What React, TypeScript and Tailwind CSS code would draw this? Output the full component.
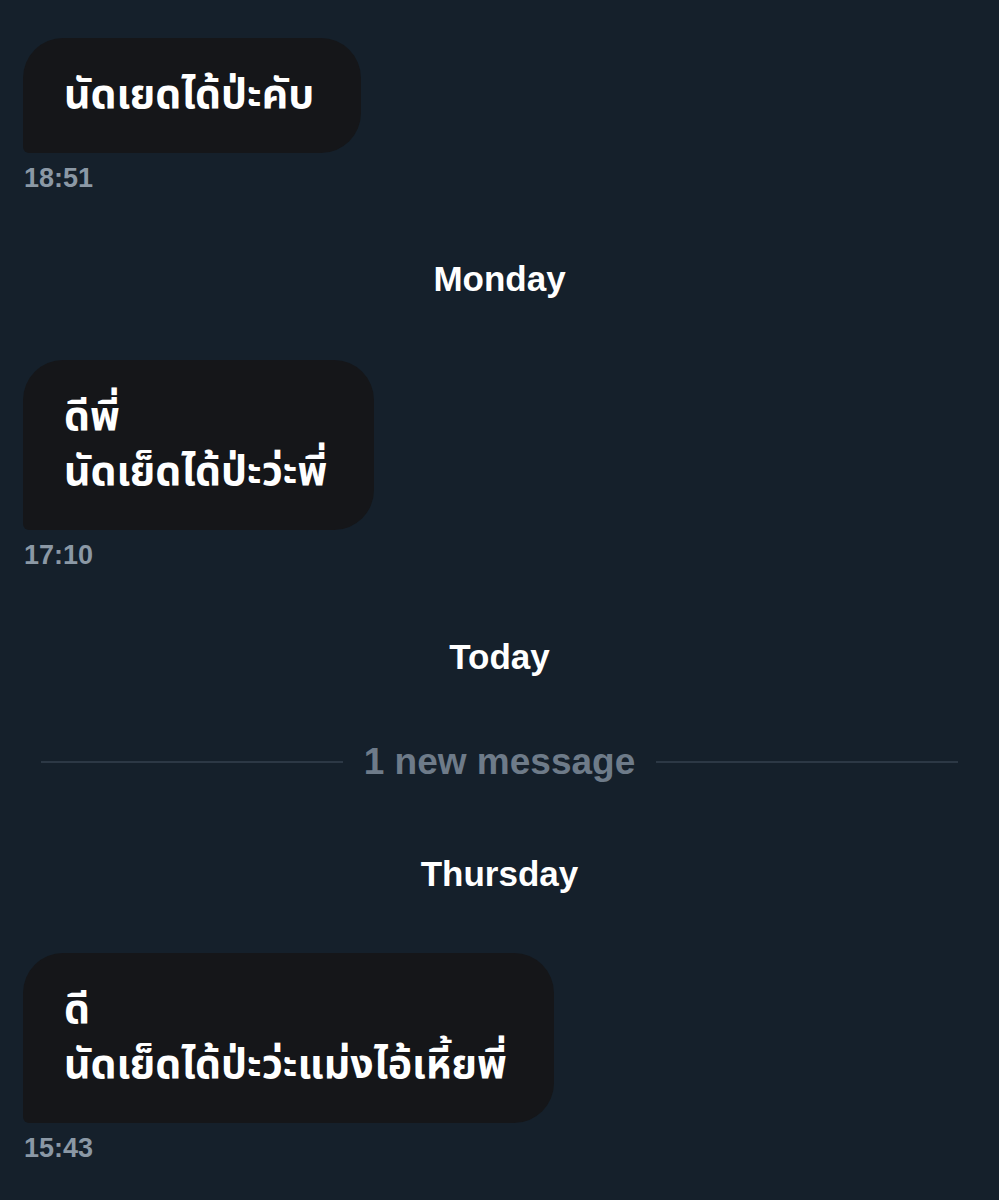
const thai = { fontFamily: '"Noto Sans Thai", "Noto Sans", "Liberation Sans", sans-serif' };

const Bubble = ({ lines, time }: { lines: string[]; time: string }) => (
  <div className="flex flex-col items-start">
    <div
      className="bg-[#151619] text-white rounded-[40px] rounded-bl-[6px] pl-[41px] pr-[47px] pt-[30px] pb-[30px] text-[41px] leading-[55px] font-bold"
      style={thai}
    >
      {lines.map((l) => (
        <div key={l}>{l}</div>
      ))}
    </div>
    <div className="mt-[7px] pl-px text-[27px] leading-[36px] font-bold text-[#8b98a5] font-['Liberation_Sans',sans-serif]">
      {time}
    </div>
  </div>
);

const DayLabel = ({ label }: { label: string }) => (
  <div className="text-center text-white font-bold text-[35px] leading-[40px] font-['Liberation_Sans',sans-serif]">
    {label}
  </div>
);

export default function App() {
  return (
    <div className="min-h-[1200px] w-[999px] bg-[#15202b] px-[23px] pt-[38px] flex flex-col">
      <Bubble lines={["นัดเยดได้ป่ะคับ"]} time="18:51" />
      <div className="mt-[63px]">
        <DayLabel label="Monday" />
      </div>
      <div className="mt-[61px]">
        <Bubble lines={["ดีพี่", "นัดเย็ดได้ป่ะว่ะพี่"]} time="17:10" />
      </div>
      <div className="mt-[64px]">
        <DayLabel label="Today" />
      </div>
      <div className="mt-[65px] flex items-center gap-[21px] px-[18px]">
        <div className="flex-1 h-[2px] bg-[#2c3845]" />
        <div className="text-[37px] leading-[40px] font-bold text-[#6e7b89] font-['Liberation_Sans',sans-serif]">
          1 new message
        </div>
        <div className="flex-1 h-[2px] bg-[#2c3845]" />
      </div>
      <div className="mt-[72px]">
        <DayLabel label="Thursday" />
      </div>
      <div className="mt-[59px]">
        <Bubble lines={["ดี", "นัดเย็ดได้ป่ะว่ะแม่งไอ้เหี้ยพี่"]} time="15:43" />
      </div>
    </div>
  );
}
